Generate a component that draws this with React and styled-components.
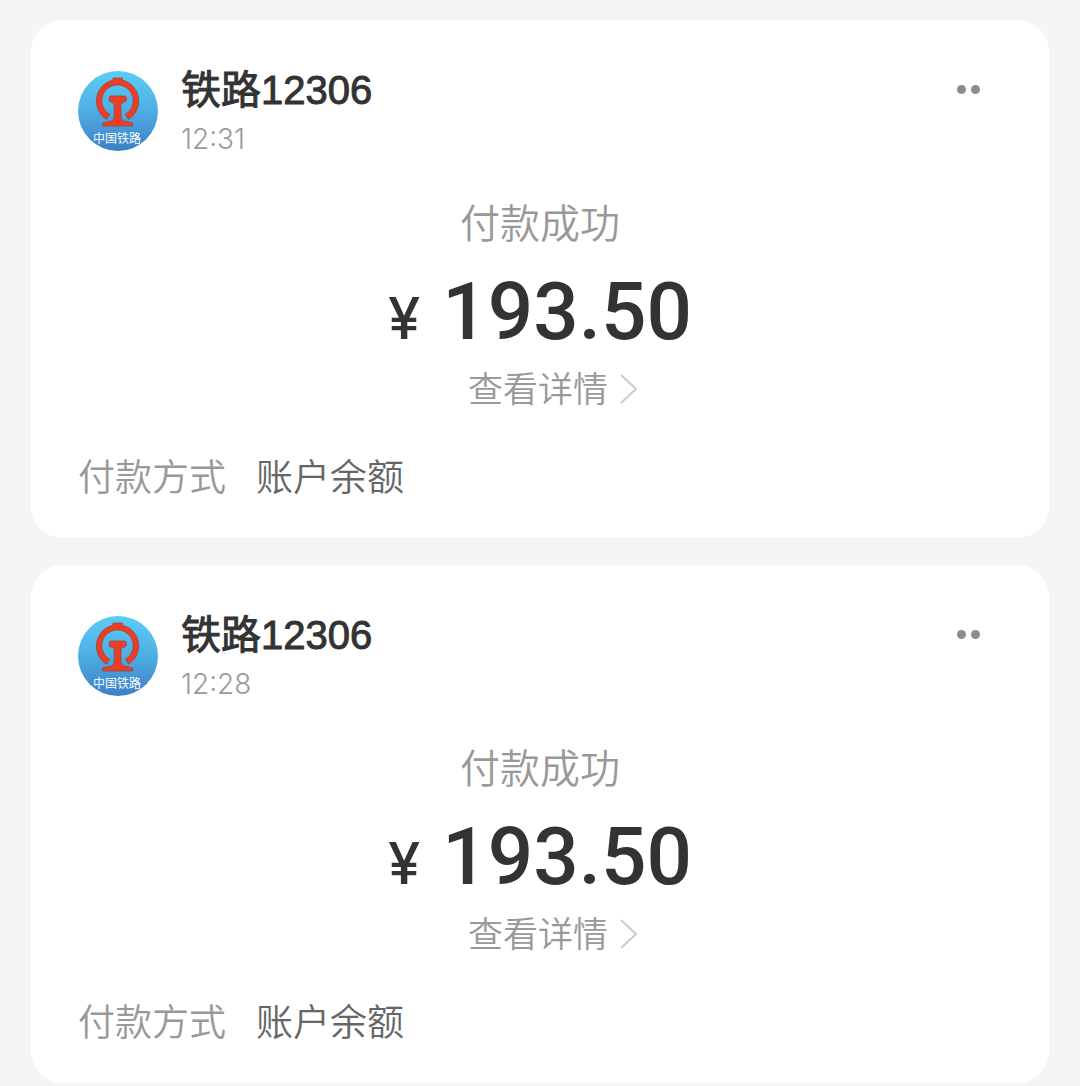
import React from 'react';
import styled, { createGlobalStyle } from 'styled-components';

const GlobalStyle = createGlobalStyle`
    body {
        margin: 0;
        background: #f5f5f5;
        font-family: Inter, "Noto Sans CJK SC", sans-serif;
        color: #333;
    }

    * {
        box-sizing: border-box;
    }
`;

const payments = [
    { id: 1, name: '铁路12306', time: '12:31', amount: '193.50', method: '账户余额' },
    { id: 2, name: '铁路12306', time: '12:28', amount: '193.50', method: '账户余额' },
];

const RailwayLogo = ({ id }) => (
    <Logo viewBox="0 0 80 80" role="img" aria-label="中国铁路">
        <defs>
            <linearGradient id={`sky-${id}`} x1="0" y1="0" x2="0" y2="1">
                <stop offset="0" stopColor="#5bcdf6" />
                <stop offset="0.5" stopColor="#4eaee3" />
                <stop offset="1" stopColor="#3d7fc6" />
            </linearGradient>
        </defs>
        <circle cx="40" cy="40" r="40" fill={`url(#sky-${id})`} />
        <g fill="#ee3d24" stroke="#8d4a4d" strokeWidth="0.8" strokeLinejoin="round">
            <path d="M35 7h9.500v2.100A21.500 21.500 0 0 1 50.500 48.300l-3.200-5A15.700 15.700 0 1 0 31.700 43.300l-3.200 5A21.500 21.500 0 0 1 35 9.100z" />
            <path d="M33 25h13.500q1.800 0 1.800 1.800v3.200l-5.300 2.500v13.500q0 3 3 4l8.700 2v3H24.500v-3l8.700-2q3-1 3-4V32.500l-5-2.500v-3.200q0-1.800 1.800-1.800z" />
        </g>
        <text x="39" y="72" textAnchor="middle" fontSize="12" fill="#fff">中国铁路</text>
    </Logo>
);

const PaymentCard = ({ payment }) => (
    <Card>
        <Header>
            <RailwayLogo id={payment.id} />
            <Merchant>
                <Name>{payment.name}</Name>
                <Time>{payment.time}</Time>
            </Merchant>
            <MoreButton type="button" aria-label="更多">
                <Dot />
                <Dot />
            </MoreButton>
        </Header>
        <Summary>
            <Status>付款成功</Status>
            <Amount>
                <Currency>¥</Currency>
                {payment.amount}
            </Amount>
            <DetailLink href="#">
                查看详情
                <Chevron viewBox="0 0 18 32" aria-hidden="true">
                    <path d="M1 2l15 14L1 30" fill="none" stroke="#ccc" strokeWidth="2" />
                </Chevron>
            </DetailLink>
        </Summary>
        <Method>
            <dt>付款方式</dt>
            <dd>{payment.method}</dd>
        </Method>
    </Card>
);

const App = () => (
    <>
        <GlobalStyle />
        <Feed>
            {payments.map((payment) => (
                <PaymentCard key={payment.id} payment={payment} />
            ))}
        </Feed>
    </>
);

const Feed = styled.main`
    display: flex;
    flex-direction: column;
    gap: 27px;
    padding: 20px 31px 3px;
`;

const Card = styled.article`
    padding: 45px 65px 32px 47px;
    background: #fff;
    border-radius: 32px;
`;

const Header = styled.header`
    display: flex;
    align-items: flex-start;
    gap: 23px;
`;

const Logo = styled.svg`
    flex: none;
    width: 80px;
    height: 80px;
    margin-top: 6px;
`;

const Merchant = styled.div`
    flex: 1;
`;

const Name = styled.h2`
    margin: 0;
    font-family: "Liberation Sans", "Noto Sans CJK SC", sans-serif;
    font-size: 40px;
    line-height: 50px;
    font-weight: 400;
    -webkit-text-stroke: 1px #333;
`;

const Time = styled.time`
    display: block;
    font-size: 28px;
    line-height: 48px;
    font-weight: 350;
    color: #999;
`;

const MoreButton = styled.button`
    display: flex;
    gap: 5px;
    margin-top: 16px;
    padding: 4px;
    border: 0;
    background: none;
    cursor: pointer;
`;

const Dot = styled.span`
    width: 9px;
    height: 9px;
    border-radius: 50%;
    background: #8c8c8c;
`;

const Summary = styled.section`
    display: flex;
    flex-direction: column;
    align-items: center;
    margin: 33px 0 41px 18px;
`;

const Status = styled.p`
    margin: 0;
    font-size: 40px;
    line-height: 56px;
    font-weight: 350;
    color: #999;
`;

const Amount = styled.p`
    display: flex;
    align-items: baseline;
    gap: 22px;
    margin: 12px 0 3px;
    font-family: Roboto, sans-serif;
    font-size: 80px;
    line-height: 96px;
    font-weight: 500;
`;

const Currency = styled.span`
    font-family: Inter, sans-serif;
    font-size: 58px;
`;

const DetailLink = styled.a`
    display: flex;
    align-items: center;
    gap: 12px;
    margin-left: 26px;
    font-size: 35px;
    line-height: 40px;
    font-weight: 350;
    color: #999;
    text-decoration: none;
`;

const Chevron = styled.svg`
    width: 18px;
    height: 32px;
`;

const Method = styled.dl`
    display: flex;
    gap: 30px;
    margin: 0;
    font-size: 37px;
    line-height: 56px;
    font-weight: 350;
    color: #666;

    dt {
        color: #999;
    }

    dd {
        margin: 0;
    }
`;

export default App;
